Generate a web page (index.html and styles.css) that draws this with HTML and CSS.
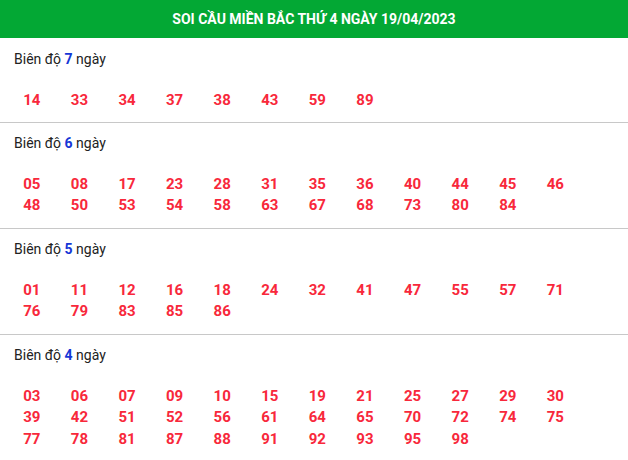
FILE: index.html
```html
<!DOCTYPE html>
<html lang="vi">
<head>
<meta charset="utf-8">
<title>Soi cầu miền Bắc</title>
<link rel="stylesheet" href="styles.css">
</head>
<body>
<div class="header">SOI CẦU MIỀN BẮC THỨ 4 NGÀY 19/04/2023</div>

<section class="group first">
  <div class="label">Biên độ <b>7</b> ngày</div>
  <div class="nums">
    <span>14</span><span>33</span><span>34</span><span>37</span><span>38</span><span>43</span><span>59</span><span>89</span>
  </div>
</section>

<section class="group">
  <div class="label">Biên độ <b>6</b> ngày</div>
  <div class="nums">
    <span>05</span><span>08</span><span>17</span><span>23</span><span>28</span><span>31</span><span>35</span><span>36</span><span>40</span><span>44</span><span>45</span><span>46</span>
    <span>48</span><span>50</span><span>53</span><span>54</span><span>58</span><span>63</span><span>67</span><span>68</span><span>73</span><span>80</span><span>84</span>
  </div>
</section>

<section class="group">
  <div class="label">Biên độ <b>5</b> ngày</div>
  <div class="nums">
    <span>01</span><span>11</span><span>12</span><span>16</span><span>18</span><span>24</span><span>32</span><span>41</span><span>47</span><span>55</span><span>57</span><span>71</span>
    <span>76</span><span>79</span><span>83</span><span>85</span><span>86</span>
  </div>
</section>

<section class="group last">
  <div class="label">Biên độ <b>4</b> ngày</div>
  <div class="nums">
    <span>03</span><span>06</span><span>07</span><span>09</span><span>10</span><span>15</span><span>19</span><span>21</span><span>25</span><span>27</span><span>29</span><span>30</span>
    <span>39</span><span>42</span><span>51</span><span>52</span><span>56</span><span>61</span><span>64</span><span>65</span><span>70</span><span>72</span><span>74</span><span>75</span>
    <span>77</span><span>78</span><span>81</span><span>87</span><span>88</span><span>91</span><span>92</span><span>93</span><span>95</span><span>98</span>
  </div>
</section>
</body>
</html>
```

FILE: styles.css
```css
html, body {
  margin: 0;
  padding: 0;
  background: #ffffff;
}
body {
  font-family: Roboto, "Liberation Sans", sans-serif;
  color: #222222;
  width: 628px;
}
.header {
  height: 38px;
  background: #03a834;
  color: #ffffff;
  font-weight: 700;
  font-size: 14px;
  line-height: 38px;
  text-align: center;
}
.group {
  padding: 10px 0 11px;
  border-bottom: 1px solid #c8c8c8;
}
.group.first {
  padding-top: 11px;
  padding-bottom: 10px;
}
.group.last {
  border-bottom: none;
}
.label {
  padding-left: 14px;
  font-size: 14px;
  line-height: 20px;
}
.label b {
  color: #1536d6;
  font-weight: 700;
}
.nums {
  margin-top: 21px;
  padding-left: 8px;
  display: flex;
  flex-wrap: wrap;
  width: 572px;
}
.nums span {
  width: 47.6px;
  text-align: center;
  font-size: 15px;
  font-weight: 700;
  line-height: 21.5px;
  color: #f8283b;
}
```
